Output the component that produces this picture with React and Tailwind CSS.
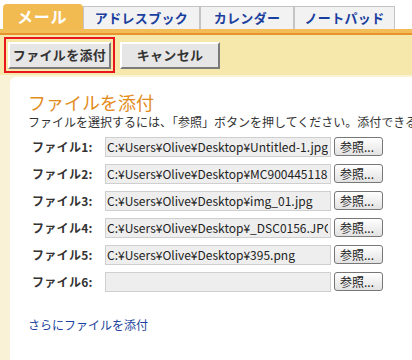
const files = [
  "C:¥Users¥Olive¥Desktop¥Untitled-1.jpg",
  "C:¥Users¥Olive¥Desktop¥MC900445118.wmf",
  "C:¥Users¥Olive¥Desktop¥img_01.jpg",
  "C:¥Users¥Olive¥Desktop¥_DSC0156.JPG",
  "C:¥Users¥Olive¥Desktop¥395.png",
  "",
];

const tabs = [
  { label: "アドレスブック", w: "w-[117px]" },
  { label: "カレンダー", w: "w-[94px]" },
  { label: "ノートパッド", w: "w-[101px]" },
];

function ToolButton({ children, className = "" }) {
  return (
    <button
      className={`h-[27px] bg-[#e6e6e6] border-t-2 border-l-2 border-t-white border-l-white border-r-2 border-b-2 border-r-[#7a7a7a] border-b-[#7a7a7a] text-[13px] font-bold text-[#333] tracking-wide ${className}`}
    >
      {children}
    </button>
  );
}

function FileRow({ n, value }) {
  return (
    <div className="flex items-center h-[27px]">
      <span className="w-[77px] pl-[4px] text-[12px] font-bold text-[#333] tracking-wide">ファイル{n}:</span>
      <div className="w-[226px] h-[20px] bg-[#eeeeee] border border-[#cfcfcf] overflow-hidden">
        <div className="w-[222px] overflow-hidden whitespace-nowrap text-[12px] leading-[18px] text-[#222] pl-[1px]">
          {value}
        </div>
      </div>
      <button className="ml-[3px] w-[49px] h-[19px] rounded-[3px] border border-[#777] bg-gradient-to-b from-white to-[#e2e2e2] text-[12px] leading-[16px] text-[#222] text-left pl-[5px]">
        参照...
      </button>
    </div>
  );
}

export default function App() {
  return (
    <div className="w-[412px] h-[360px] overflow-hidden bg-white font-['Noto_Sans_CJK_JP','Noto_Sans',sans-serif]">
      {/* Tabs */}
      <div className="flex items-end h-[29px] pl-[3px]">
        <div className="w-[80px] h-[25px] bg-[#f1bb52] rounded-t-[4px] text-white font-bold text-[16px] leading-[24px] pl-[14px] tracking-wider">
          メール
        </div>
        {tabs.map((t) => (
          <div
            key={t.label}
            className={`${t.w} h-[23px] bg-[#f2f2f2] border border-b-0 border-[#c4c4c4] text-[#1b3f9e] font-bold text-[13px] leading-[22px] text-center tracking-wide`}
          >
            {t.label}
          </div>
        ))}
      </div>
      <div className="h-[6px] bg-[#f2bc57] border-b-2 border-[#e7922c]" />

      {/* Toolbar */}
      <div className="h-[40px] bg-[#f6e7aa] flex items-center pl-[4px] gap-[4px]">
        <div className="border-2 border-[#e8161a] p-[2px]">
          <ToolButton className="w-[103px]">ファイルを添付</ToolButton>
        </div>
        <ToolButton className="w-[100px] ml-[1px]">キャンセル</ToolButton>
      </div>

      {/* Body */}
      <div className="bg-[#faf2d6] pt-[2px] pl-[10px] h-[300px]">
        <div className="bg-white h-full rounded-tl-[6px] pl-[18px] pt-[15px]">
          <h1 className="text-[#e28c1c] text-[18px] leading-[20px]">ファイルを添付</h1>
          <p className="mt-[2px] text-[12px] leading-[16px] text-[#333] whitespace-nowrap overflow-hidden">
            ファイルを選択するには、「参照」ボタンを押してください。添付できるファ
          </p>
          <div className="mt-[3px]">
            {files.map((f, i) => (
              <FileRow key={i} n={i + 1} value={f} />
            ))}
          </div>
          <a className="block mt-[21px] text-[12px] text-[#1a3f9c]">さらにファイルを添付</a>
        </div>
      </div>
    </div>
  );
}
